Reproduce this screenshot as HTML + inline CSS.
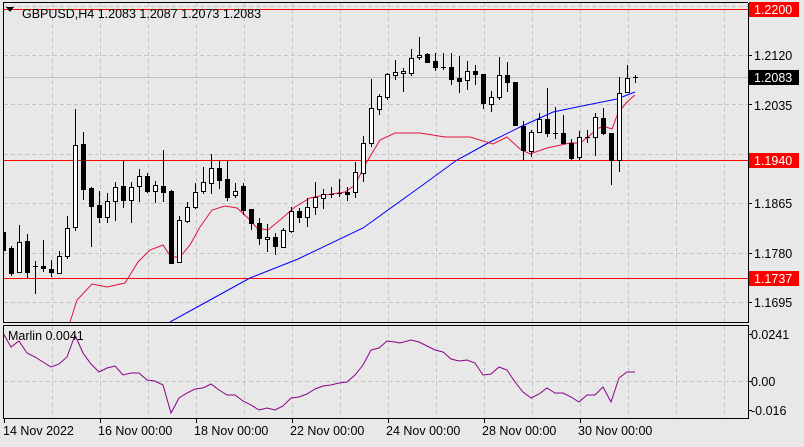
<!DOCTYPE html>
<html><head><meta charset="utf-8"><style>
body{margin:0;background:#e8e8e8;width:804px;height:442px;overflow:hidden;font-family:"Liberation Sans",sans-serif}
svg text{font-family:"Liberation Sans",sans-serif;font-size:12.5px}
</style></head><body>
<svg width="804" height="442" viewBox="0 0 804 442" xmlns="http://www.w3.org/2000/svg" shape-rendering="crispEdges">
<rect width="804" height="442" fill="#e8e8e8"/>
<defs><clipPath id="c"><rect x="4" y="3" width="744" height="319"/></clipPath><clipPath id="c2"><rect x="4" y="326" width="744" height="92"/></clipPath></defs>
<g stroke="#c4c4c4" stroke-dasharray="4,3" stroke-width="1">
<path d="M52.5 3V322M100.5 3V322M148.5 3V322M196.5 3V322M244.5 3V322M292.5 3V322M340.5 3V322M388.5 3V322M436.5 3V322M484.5 3V322M532.5 3V322M580.5 3V322M628.5 3V322M676.5 3V322M724.5 3V322"/>
<path d="M4 6.5H748M4 55.5H748M4 104.5H748M4 154.5H748M4 203.5H748M4 253.5H748M4 302.5H748"/>
<path d="M52.5 326V418M100.5 326V418M148.5 326V418M196.5 326V418M244.5 326V418M292.5 326V418M340.5 326V418M388.5 326V418M436.5 326V418M484.5 326V418M532.5 326V418M580.5 326V418M628.5 326V418M676.5 326V418M724.5 326V418M4 381.5H748"/>
</g>
<path d="M4 77.5H748" stroke="#c0c0c0"/>
<path d="M4 9.5H748M4 160.5H748M4 278.5H748" stroke="#ff0000"/>
<g clip-path="url(#c)" fill="none" shape-rendering="auto">
<polyline stroke="#0000ff" points="170,322 210,300 250,278 298,259 363,228 420,187 457,160 470,153 490,142 520,127 553,112 587,105 617,99 635,92"/>
<polyline stroke="#e0143c" points="70,322 77,300 92,284 107,287 125,283 138,262 150,250 163,245 171,257 180,257 190,245 200,227 212,210 225,206 237,208 248,218 257,228 268,230 280,220 295,207 310,198 325,195 345,192 355,185 365,165 380,140 395,133 420,133 445,137 470,137 493,144 507,137 520,149 530,154 547,148 570,143 580,143 588,137 597,129 603,126 612,129 618,113 627,102 635,95"/>
</g>
<g clip-path="url(#c)" stroke="#000">
<path d="M3.5 232V255M11.5 246V276M19.5 225V273M27.5 234V278M35.5 261V294M43.5 240V272M51.5 260V277M59.5 251V274M67.5 216V259M75.5 109V231M83.5 132V200M91.5 187V247M99.5 191V223M107.5 193V223M115.5 182V221M123.5 161V208M131.5 182V223M139.5 169V202M147.5 173V193M155.5 181V203M163.5 150V202M171.5 190V263M179.5 216V263M187.5 202V223M195.5 183V209M203.5 167V194M211.5 154V194M219.5 161V189M227.5 161V201M235.5 183V198M243.5 183V215M251.5 209V230M259.5 218V245M267.5 224V252M275.5 233V255M283.5 228V248M291.5 207V233M299.5 208V223M307.5 198V227M315.5 182V215M323.5 189V209M331.5 187V198M339.5 179V197M347.5 187V201M355.5 162V198M363.5 136V182M371.5 79V147M379.5 94V115M387.5 73V100M395.5 60V80M403.5 68V92M411.5 49V76M419.5 37V60M427.5 53V63M435.5 53V71M443.5 53V70M451.5 53V85M459.5 56V93M467.5 61V90M475.5 65V85M483.5 74V109M491.5 91V112M499.5 57V100M507.5 62V92M515.5 82V125M523.5 121V160M531.5 130V157M539.5 113V133M547.5 88V137M555.5 107V139M563.5 115V144M571.5 139V160M579.5 131V160M587.5 130V143M595.5 113V156M603.5 108V135M611.5 133V185M619.5 77V172M627.5 65V93M635.5 75V83"/>
<path d="M33 266.5H38M329 194.5H334M337 193.5H342M441 67.5H446M553 133.5H558M585 137.5H590M633 77.5H638"/>
<g fill="#000" stroke="none">
<rect x="1" y="232" width="5" height="19"/><rect x="9" y="248" width="5" height="26"/><rect x="25" y="241" width="5" height="32"/><rect x="41" y="266" width="5" height="3"/><rect x="49" y="269" width="5" height="4"/><rect x="81" y="144" width="5" height="46"/><rect x="89" y="188" width="5" height="19"/><rect x="97" y="205" width="5" height="13"/><rect x="121" y="186" width="5" height="15"/><rect x="145" y="176" width="5" height="16"/><rect x="161" y="186" width="5" height="7"/><rect x="169" y="191" width="5" height="73"/><rect x="217" y="168" width="5" height="13"/><rect x="225" y="179" width="5" height="19"/><rect x="241" y="186" width="5" height="25"/><rect x="249" y="209" width="5" height="15"/><rect x="257" y="223" width="5" height="16"/><rect x="273" y="237" width="5" height="10"/><rect x="297" y="211" width="5" height="7"/><rect x="345" y="192" width="5" height="3"/><rect x="425" y="54" width="5" height="9"/><rect x="433" y="61" width="5" height="7"/><rect x="449" y="67" width="5" height="13"/><rect x="457" y="78" width="5" height="4"/><rect x="473" y="71" width="5" height="4"/><rect x="481" y="74" width="5" height="30"/><rect x="505" y="75" width="5" height="8"/><rect x="513" y="82" width="5" height="44"/><rect x="521" y="126" width="5" height="25"/><rect x="545" y="119" width="5" height="15"/><rect x="561" y="133" width="5" height="11"/><rect x="569" y="143" width="5" height="16"/><rect x="601" y="118" width="5" height="16"/><rect x="609" y="133" width="5" height="28"/>
</g>
<g fill="#fff">
<rect x="17.5" y="242.5" width="4" height="30"/><rect x="57.5" y="256.5" width="4" height="17"/><rect x="65.5" y="228.5" width="4" height="28"/><rect x="73.5" y="145.5" width="4" height="82"/><rect x="105.5" y="201.5" width="4" height="16"/><rect x="113.5" y="187.5" width="4" height="14"/><rect x="129.5" y="187.5" width="4" height="13"/><rect x="137.5" y="176.5" width="4" height="10"/><rect x="153.5" y="185.5" width="4" height="6"/><rect x="177.5" y="220.5" width="4" height="42"/><rect x="185.5" y="207.5" width="4" height="14"/><rect x="193.5" y="192.5" width="4" height="15"/><rect x="201.5" y="182.5" width="4" height="9"/><rect x="209.5" y="168.5" width="4" height="15"/><rect x="233.5" y="191.5" width="4" height="4"/><rect x="265.5" y="237.5" width="4" height="2"/><rect x="281.5" y="230.5" width="4" height="17"/><rect x="289.5" y="211.5" width="4" height="20"/><rect x="305.5" y="207.5" width="4" height="10"/><rect x="313.5" y="197.5" width="4" height="10"/><rect x="321.5" y="194.5" width="4" height="4"/><rect x="353.5" y="172.5" width="4" height="20"/><rect x="361.5" y="143.5" width="4" height="30"/><rect x="369.5" y="108.5" width="4" height="35"/><rect x="377.5" y="96.5" width="4" height="13"/><rect x="385.5" y="74.5" width="4" height="23"/><rect x="393.5" y="72.5" width="4" height="3"/><rect x="401.5" y="71.5" width="4" height="2"/><rect x="409.5" y="58.5" width="4" height="15"/><rect x="417.5" y="55.5" width="4" height="2"/><rect x="465.5" y="71.5" width="4" height="9"/><rect x="489.5" y="97.5" width="4" height="7"/><rect x="497.5" y="75.5" width="4" height="22"/><rect x="529.5" y="132.5" width="4" height="19"/><rect x="537.5" y="119.5" width="4" height="13"/><rect x="577.5" y="137.5" width="4" height="20"/><rect x="593.5" y="117.5" width="4" height="20"/><rect x="617.5" y="93.5" width="4" height="67"/><rect x="625.5" y="78.5" width="4" height="14"/>
</g>
</g>
<polyline clip-path="url(#c2)" fill="none" stroke="#8b008b" shape-rendering="auto" points="3,333 11,347 19,341 27,353 35,357 43,362 51,367 59,364 67,357 75,335 83,353 91,364 99,372 107,368 115,366 123,375 131,373 139,373 147,380 155,381 163,385 171,413 179,398 187,393 195,389 203,388 211,384 219,390 227,395 235,395 243,401 251,405 259,410 267,408 275,410 283,406 291,398 299,397 307,394 315,389 323,386 331,385 339,383 347,382 355,375 363,365 371,350 379,348 387,341 395,342 400,343 411,340 419,342 427,346 435,350 443,352 451,359 459,361 467,360 475,363 483,375 491,374 499,367 507,370 515,382 523,392 531,398 539,394 547,388 555,393 563,393 571,397 579,402 587,395 595,395 603,387 611,402 619,378 627,372 635,372"/>
<text x="8" y="340" fill="#000">Marlin 0.0041</text>
<g fill="none" stroke="#000">
<path d="M3.5 3V322.5H748.5V3"/>
<path d="M3.5 325.5V418.5H748.5V325.5H3.5"/>
<path d="M3 2.5H748"/>
<path d="M4.5 419V423M100.5 419V423M196.5 419V423M292.5 419V423M388.5 419V423M484.5 419V423M580.5 419V423M749 55.5H752M749 104.5H752M749 203.5H752M749 253.5H752M749 302.5H752M749 334.5H752M749 381.5H752M749 410.5H752"/>
</g>
<path d="M6 7L14 7L10 12Z" fill="#000"/>
<text x="22" y="18" fill="#000">GBPUSD,H4  1.2083 1.2087 1.2073 1.2083</text>
<g fill="#000">
<text x="754" y="60">1.2120</text><text x="754" y="110">1.2035</text><text x="754" y="208">1.1865</text><text x="754" y="258">1.1780</text><text x="754" y="307">1.1695</text>
<text x="751" y="339">0.0241</text><text x="751" y="386">0.00</text><text x="751" y="415">-0.016</text>
</g>
<rect x="749" y="2" width="50" height="15" fill="#ff0000"/><text x="754" y="14" fill="#fff">1.2200</text>
<rect x="749" y="70" width="50" height="15" fill="#000"/><text x="754" y="82" fill="#fff">1.2083</text>
<rect x="749" y="153" width="50" height="15" fill="#ff0000"/><text x="754" y="165" fill="#fff">1.1940</text>
<rect x="749" y="271" width="50" height="15" fill="#ff0000"/><text x="754" y="283" fill="#fff">1.1737</text>
<g fill="#000">
<text x="3" y="435">14 Nov 2022</text><text x="98" y="435">16 Nov 00:00</text><text x="194" y="435">18 Nov 00:00</text><text x="290" y="435">22 Nov 00:00</text><text x="386" y="435">24 Nov 00:00</text><text x="482" y="435">28 Nov 00:00</text><text x="578" y="435">30 Nov 00:00</text>
</g>
</svg>
</body></html>
